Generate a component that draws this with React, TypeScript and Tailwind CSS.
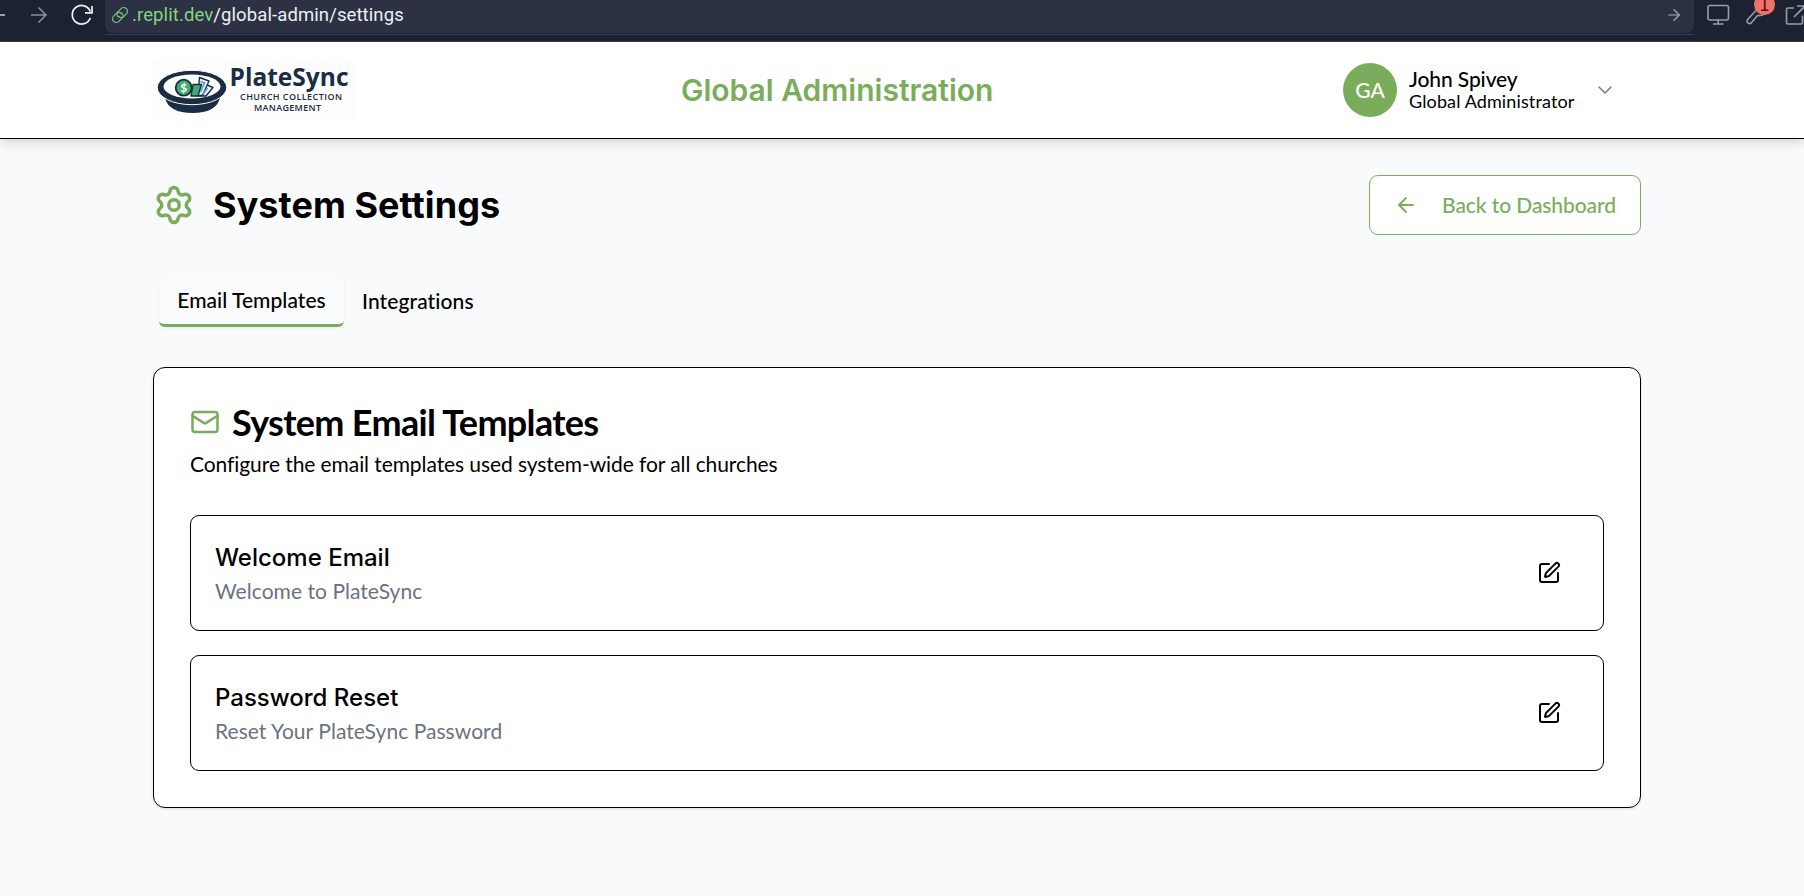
import { ArrowLeft, ArrowRight, ChevronDown, Mail, Settings, SquarePen } from "lucide-react";

const LATO = "font-['Lato',sans-serif]";
const INTER = "font-['Inter',sans-serif]";

function BrowserBar() {
  return (
    <div className="flex h-[42px] w-full shrink-0 items-start overflow-hidden border-b border-[#363a4a] bg-[#1d2232]">
      <div className="flex w-[105px] shrink-0 items-start">
        <svg className="h-8 w-[105px]" viewBox="0 0 105 32" fill="none">
          <path d="M0 15h5" stroke="#c9cbd2" strokeWidth="1.5" />
          <path d="M31 15h15M38.500 7.500l7.500 7.500l-7.500 7.500" stroke="#8d909c" strokeWidth="1.500" />
          <path d="M90.300 11.500A9.300 9.300 0 1 0 90.300 18M92 6v6.800h-7" stroke="#f0f1f5" strokeWidth="1.700" />
        </svg>
      </div>
      <div className="flex h-[35px] w-[1589px] shrink-0 flex-col border-b border-[#363b4e]">
        <div className="flex h-[33px] items-start rounded-b-lg bg-[#2c3144] pl-[6px]">
          <svg className="mt-[6px] h-[18px] w-[18px] shrink-0" viewBox="0 0 24 24" fill="none" stroke="#6fc276" strokeWidth="1.700" strokeLinecap="round">
            <path d="M9.500 14.500a5 5 0 0 1 0-7l4-4a4.600 4.600 0 0 1 7 7l-3.500 3.500a4.600 4.600 0 0 1-6.500 0" />
            <path d="M14.500 9.500a5 5 0 0 1 0 7l-4 4a4.600 4.600 0 0 1-7-7l3.500-3.500a4.600 4.600 0 0 1 6.500 0" />
          </svg>
          <p className="ml-[3px] whitespace-nowrap font-['Roboto',sans-serif] text-[18.500px] leading-[30px] tracking-[0.1px] text-[#eef0f5]">
            <span className="text-[#86d67e]">.replit.dev</span>/global-admin/settings
          </p>
          <ArrowRight className="mr-[11px] ml-auto mt-[6px] h-[18px] w-[18px] text-[#a9abb4]" strokeWidth={1.6} />
        </div>
      </div>
      <svg className="h-8 w-[110px] shrink-0" viewBox="1694 0 110 32" fill="none" stroke="#9b9da3" strokeWidth="1.600">
        <rect x="1708" y="5.500" width="20.500" height="14.500" rx="2" />
        <path d="M1718.200 20v4M1713 24h10.500" />
        <path d="M1756 10.500l-8.200 8.800a2.400 2.400 0 1 0 3.400 3.600l6.300-7.400q5 .5 7.500-2" strokeLinejoin="round" />
        <path d="M1794 8h-6q-1.500 0-1.500 1.500v13q0 1.500 1.500 1.500h13q1.500 0 1.500-1.500v-7M1794 17l12-12M1797 6h8" />
        <circle cx="1764.500" cy="4.500" r="10.500" fill="#f0716a" stroke="none" />
        <text x="1764.500" y="11.200" textAnchor="middle" fontSize="17" fontFamily="DejaVu Sans, sans-serif" fill="#5c1010" stroke="none">1</text>
      </svg>
    </div>
  );
}

function Logo() {
  return (
    <svg className="h-[60px] w-[202px] shrink-0" viewBox="153 60 202 60">
      <rect x="153" y="60" width="202" height="60" fill="#fdfdfd" />
      <path d="M165 98h55q-4 15-27.500 15t-27.500-15z" fill="#1b2d45" />
      <ellipse cx="192" cy="87.500" rx="34.800" ry="17.200" fill="#1b2d45" stroke="#fdfdfd" strokeWidth="1" />
      <ellipse cx="192" cy="86.500" rx="28.500" ry="12" fill="#fdfdfd" />
      <g stroke="#1b2d45" strokeWidth="1.400" strokeLinejoin="round">
        <path d="M206 84.500l7 3l-7 8.500h-8z" fill="#eef4fc" />
        <path d="M199.500 77.500l9.500 3.500l-6.500 14.500h-8l4-7z" fill="#eef4fc" />
        <path d="M193 84.500h8.500l-3.500 11.500h-7z" fill="#43aa72" />
        <circle cx="183.700" cy="87.700" r="8" fill="#43aa72" strokeWidth="1.800" />
      </g>
      <path d="M200.500 81.500l4 1.500l-4 9M207.500 88l-4.500 6" stroke="#5d94dd" strokeWidth="1.600" fill="none" />
      <text x="183.700" y="92" textAnchor="middle" fontSize="12" fontFamily="Lato, sans-serif" fontWeight="700" fill="#fff">$</text>
      <g fill="#1b2d45" fontFamily="Open Sans, Noto Sans, sans-serif">
        <text x="229.500" y="86" fontSize="25" fontWeight="700" textLength="119" lengthAdjust="spacingAndGlyphs">PlateSync</text>
        <text x="240" y="100" fontSize="9" fontWeight="600" textLength="102" lengthAdjust="spacing">CHURCH COLLECTION</text>
        <text x="254" y="110.500" fontSize="9" fontWeight="600" textLength="67" lengthAdjust="spacing">MANAGEMENT</text>
      </g>
    </svg>
  );
}

function Header() {
  return (
    <header className="flex h-[97px] shrink-0 items-center border-b border-black bg-white pl-[153px] shadow-[0_4px_10px_rgba(0,0,0,0.14)]">
      <Logo />
      <h1 className={`${INTER} ml-[326px] w-[314px] whitespace-nowrap text-[30px] font-semibold leading-9 text-[#7aad5b]`}>Global Administration</h1>
      <div className="ml-[348px] flex items-center">
        <div className={`${LATO} flex size-[54px] items-center justify-center rounded-full bg-[#7aad5b] text-[21px] font-medium text-white`}>GA</div>
        <div className={`${LATO} ml-3 w-[180px] whitespace-nowrap text-black`}>
          <div className="text-[21px] font-medium leading-[22px] tracking-[-0.1px]">John Spivey</div>
          <div className="text-[18px] leading-[22px] tracking-[0.12px]">Global Administrator</div>
        </div>
        <ChevronDown className="ml-1 size-[24px] text-[#808080]" strokeWidth={1.6} />
      </div>
    </header>
  );
}

function TemplateRow({ title, subject }: { title: string; subject: string }) {
  return (
    <div className="flex h-[116px] items-center justify-between rounded-[9px] border border-black pr-[42px] pl-6">
      <div>
        <h3 className={`${INTER} pt-[2px] text-[24px] font-medium leading-[34px] text-black`}>{title}</h3>
        <p className={`${LATO} text-[21px] leading-[32px] tracking-[0.05px] text-[#6b7280]`}>{subject}</p>
      </div>
      <SquarePen className="size-6 text-black" strokeWidth={2} />
    </div>
  );
}

export default function App() {
  return (
    <div className="flex h-[896px] w-full flex-col overflow-hidden bg-[#f9fafc]">
      <BrowserBar />
      <Header />
      <main className="ml-[153px] w-[1488px] pt-9">
        <div className="flex h-[60px] items-center justify-between">
          <div className="flex items-center">
            <Settings className="size-[42px] text-[#7aad5b]" strokeWidth={2} />
            <h2 className={`${INTER} ml-[18px] whitespace-nowrap text-[36px] font-bold leading-[48px] tracking-[0.06px] text-black`}>System Settings</h2>
          </div>
          <button className={`${LATO} flex h-[60px] w-[272px] items-center rounded-[9px] border border-[#7aad5b] bg-white pl-6 text-[21px] font-medium tracking-[-0.08px] text-[#7aad5b]`}>
            <ArrowLeft className="size-6" strokeWidth={1.8} />
            <span className="ml-6 whitespace-nowrap">Back to Dashboard</span>
          </button>
        </div>
        <div className={`${LATO} mt-[41px] flex items-center pl-[6px] text-[21px] font-medium tracking-[0.04px] text-black`}>
          <div className="flex h-[51px] w-[185px] items-center justify-center rounded-[6px] border-b-[3px] border-[#7aad5b] bg-[#fafbfc] shadow-[0_1px_3px_rgba(0,0,0,0.06)]">Email Templates</div>
          <div className="ml-[18px] pb-[2px] tracking-[0.1px]">Integrations</div>
        </div>
        <section className="mt-10 h-[441px] rounded-xl border border-black bg-white px-9 pt-9 shadow-[0_1px_3px_rgba(0,0,0,0.12)]">
          <div className="flex h-9 items-center">
            <Mail className="size-[30px] text-[#7aad5b]" strokeWidth={2} />
            <h2 className={`${LATO} ml-3 whitespace-nowrap text-[36px] font-bold leading-9 tracking-[-0.680px] text-black`}>System Email Templates</h2>
          </div>
          <p className={`${LATO} mt-[9px] text-[21px] leading-[30px] tracking-[-0.08px] text-black`}>Configure the email templates used system-wide for all churches</p>
          <div className="mt-9 flex flex-col gap-6">
            <TemplateRow title="Welcome Email" subject="Welcome to PlateSync" />
            <TemplateRow title="Password Reset" subject="Reset Your PlateSync Password" />
          </div>
        </section>
      </main>
    </div>
  );
}
